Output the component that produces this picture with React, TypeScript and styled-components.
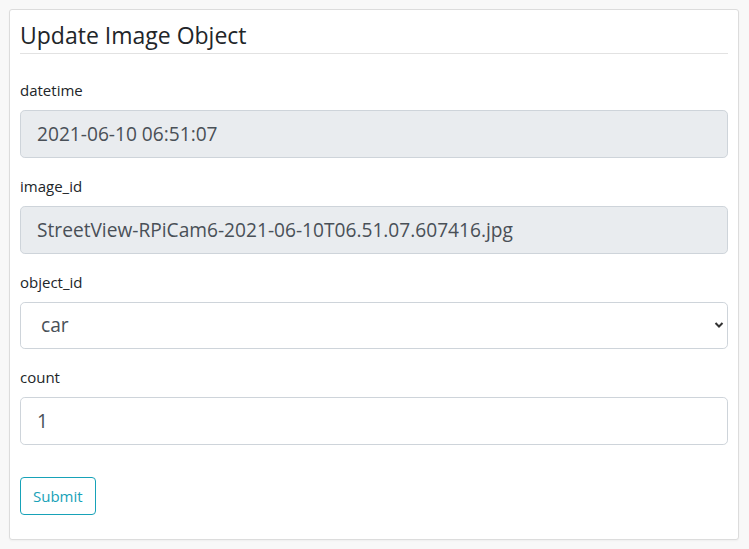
import React from "react";
import styled, { createGlobalStyle } from "styled-components";

const Global = createGlobalStyle`
  html, body { margin: 0; padding: 0; background: #f8f8f8; }
  body { font-family: "Open Sans", "Noto Sans", sans-serif; color: #212529; }
  * { box-sizing: border-box; }
`;

const Page = styled.div`
  padding: 9px 10px 9px 9px;
`;

const Card = styled.div`
  background: #fff;
  border: 1px solid #dcdcdc;
  border-radius: 3px;
  box-shadow: 0 1px 2px rgba(0, 0, 0, 0.04);
  padding: 11px 10px 24px;
  height: 531px;
`;

const Title = styled.h4`
  margin: 0 0 24px;
  font-size: 23px;
  font-weight: 400;
  line-height: 28.8px;
  padding-bottom: 3px;
  border-bottom: 1px solid #e2e2e2;
  color: #212529;
`;

const Group = styled.div`
  margin-bottom: 16px;
`;

const Label = styled.label`
  display: block;
  font-size: 15px;
  line-height: 24px;
  margin-bottom: 8px;
  color: #212529;
`;

const Input = styled.input<{ $disabled?: boolean }>`
  display: block;
  width: 100%;
  height: 48px;
  padding: 8px 16px;
  font-family: inherit;
  font-size: 19.15px;
  line-height: 30px;
  color: #495057;
  background: ${(p) => (p.$disabled ? "#e9ecef" : "#fff")};
  border: 1px solid #ced4da;
  border-radius: 4.8px;
  outline: none;
`;

const SelectWrap = styled.div`
  position: relative;
`;

const Select = styled.select`
  display: block;
  width: 100%;
  height: 47px;
  padding: 8px 16px 8px 20px;
  font-family: inherit;
  font-size: 19.15px;
  color: #495057;
  background: #fff;
  border: 1px solid #ced4da;
  border-radius: 4.8px;
  appearance: none;
  -webkit-appearance: none;
  outline: none;
`;

const Caret = styled.svg`
  position: absolute;
  right: 4px;
  top: 19px;
  width: 10px;
  height: 8px;
  pointer-events: none;
`;

const Button = styled.button`
  margin-top: 16px;
  height: 38px;
  padding: 6px 12px;
  font-family: inherit;
  font-size: 15px;
  line-height: 24px;
  color: #17a2b8;
  background: transparent;
  border: 1px solid #17a2b8;
  border-radius: 4px;
`;

export default function App() {
  return (
    <>
      <Global />
      <Page>
        <Card>
          <Title>Update Image Object</Title>
          <Group>
            <Label>datetime</Label>
            <Input $disabled readOnly value="2021-06-10 06:51:07" />
          </Group>
          <Group>
            <Label>image_id</Label>
            <Input $disabled readOnly value="StreetView-RPiCam6-2021-06-10T06.51.07.607416.jpg" />
          </Group>
          <Group>
            <Label>object_id</Label>
            <SelectWrap>
              <Select defaultValue="car">
                <option value="car">car</option>
              </Select>
              <Caret viewBox="0 0 10 8">
                <path d="M1.5 2 L5 5.5 L8.5 2" fill="none" stroke="#333" strokeWidth="2" />
              </Caret>
            </SelectWrap>
          </Group>
          <Group>
            <Label>count</Label>
            <Input readOnly value="1" />
          </Group>
          <Button>Submit</Button>
        </Card>
      </Page>
    </>
  );
}
